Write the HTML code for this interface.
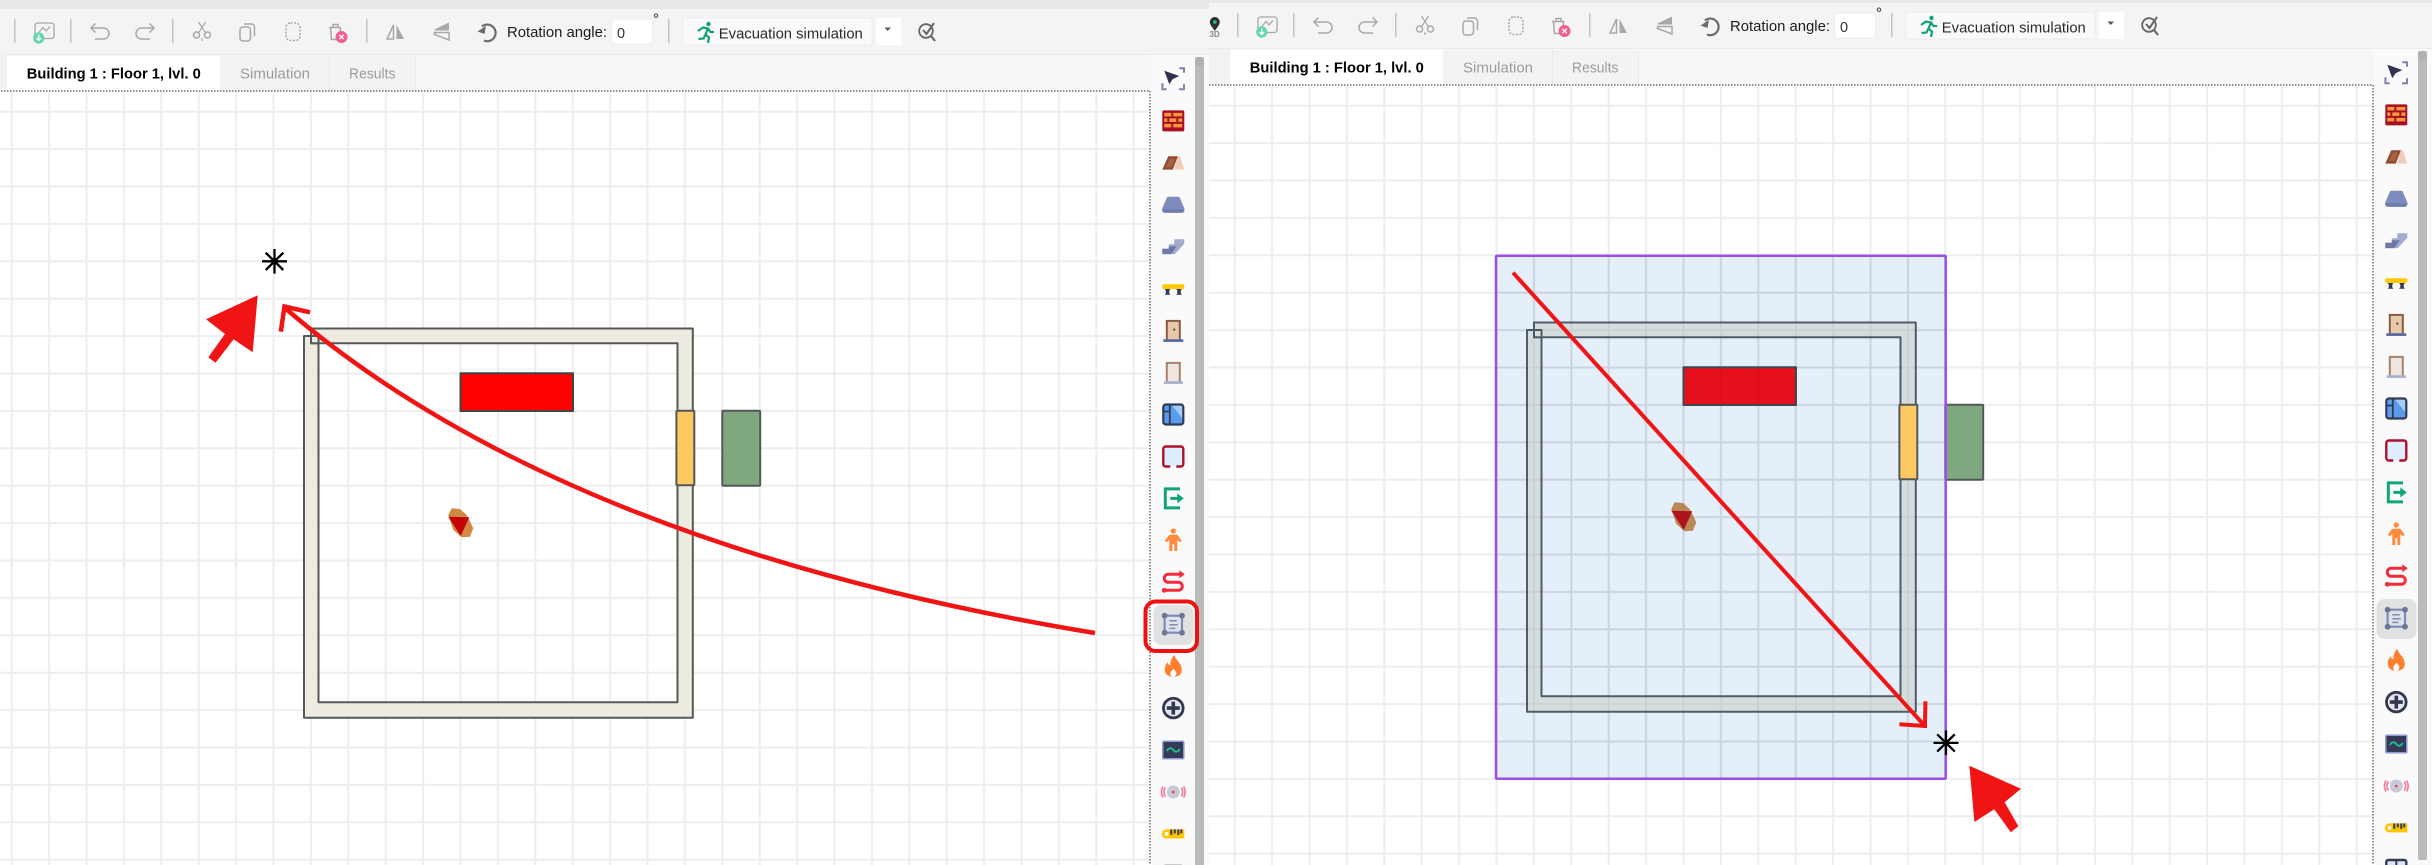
<!DOCTYPE html>
<html><head><meta charset="utf-8"><title>Evacuation</title>
<style>html,body{margin:0;padding:0;background:#fff;width:2432px;height:865px;overflow:hidden}svg{display:block}
text{font-family:"Liberation Sans",sans-serif}</style></head>
<body>
<svg xmlns="http://www.w3.org/2000/svg" width="2432" height="865" viewBox="0 0 2432 865">
<defs>
<pattern id="grid" patternUnits="userSpaceOnUse" x="-7" y="93" width="37.4" height="37.4">
<path d="M18.7 0V37.4M0 18.7H37.4" stroke="#ededed" stroke-width="2" fill="none"/>
</pattern>

<g id="scene">
<rect x="-14" y="92" width="1165" height="790" fill="#fff"/>
<rect x="-14" y="92" width="1165" height="790" fill="url(#grid)"/>
<g stroke="#55585a" stroke-width="2" stroke-linejoin="round">
<path d="M311 328.5H692.8V717.7H304V336H318.5V702.3H677.5V343.3H311Z" fill="#eeebe0"/>
<path d="M304 336H318.5V343.3" fill="none"/>
<rect x="311" y="336" width="7.5" height="7.5" fill="none" stroke-width="1.6"/>
<rect x="460.5" y="373.3" width="112.5" height="37.7" fill="#ff0000" stroke="#444"/>
</g>
<path d="M448.3 515L451.7 508.3 460 509 466.7 515 473.3 528.3 470 536.7 461.7 537.3 453.3 530Z" fill="#d08a45"/>
<path d="M448.3 516.7L469.3 517.3 460.7 536Z" fill="#c40505"/>
</g>
<g id="doorwin" stroke="#55585a" stroke-width="2">
<rect x="676.4" y="410.7" width="17.9" height="74.6" fill="#fdc962" rx="1"/>
<rect x="722.3" y="410.7" width="37.9" height="75" fill="#80a87e" rx="1"/>
</g>

<g id="toolbar">
<rect x="-14" y="-6" width="1223" height="15" fill="#e8e8e8"/>
<rect x="-14" y="9" width="1223" height="46" fill="#f4f4f4"/>
<rect x="-14" y="54" width="1223" height="1" fill="#ebebeb"/>
<rect x="-14" y="55" width="1165" height="36" fill="#f7f7f7"/>
<rect x="-14" y="55" width="21" height="36" fill="#f2f2f2"/>
<rect x="220" y="56" width="195" height="35" fill="#f3f3f3"/>
<rect x="329" y="56" width="1" height="35" fill="#e9e9e9"/>
<rect x="415" y="56" width="1" height="35" fill="#e9e9e9"/>
<rect x="7" y="56" width="213" height="35" fill="#fff"/>
<g fill="#c4c4c4">
<rect x="14" y="19" width="1.5" height="24"/><rect x="70" y="19" width="1.5" height="24"/><rect x="172" y="19" width="1.5" height="24"/><rect x="366" y="19" width="1.5" height="24"/><rect x="668" y="19" width="1.5" height="24"/>
</g>
<g fill="none" stroke="#a8a8a8" stroke-width="1.3">
<rect x="35" y="23" width="19" height="15.5" rx="2.5"/>
<path d="M38.5 33L43 27.5 46 31 50 26.5"/>
</g>
<circle cx="38.8" cy="38" r="5.6" fill="#63d6ad"/><path d="M38.8 34.5V40M36.4 38l2.4 2.4 2.4-2.4" stroke="#fff" stroke-width="1.3" fill="none"/>
<g fill="none" stroke="#a8a8a8" stroke-width="1.5">
<path d="M91 28H103.5A5.5 5.5 0 0 1 103.5 39H95M95.5 23.5L91 28 95.5 32.5"/>
<path d="M154 28H141.500A5.500 5.500 0 0 0 141.500 39H150M149.500 23.500L154 28 149.500 32.500"/>
<circle cx="196.500" cy="35" r="3"/><circle cx="207.500" cy="35" r="3"/>
<path d="M198.500 32.800L205.500 22M205.500 32.800L198.500 22M202 38V41" stroke-width="1.200"/>
<rect x="240" y="27" width="10.500" height="14" rx="3"/>
<path d="M244 24H251.500A3 3 0 0 1 254.500 27V36"/>
<rect x="286" y="23" width="14" height="17.500" rx="4.500" stroke-dasharray="2 1.500"/>
<path d="M329 27.500H341M330.500 27.500L331.500 39.500H339.500L340.500 27.500M333 27.500V24.500H338V27.500"/>
<path d="M393.500 25L387 39H393.500Z"/>
<path d="M434.500 32.500H449L449 40 434.500 34.500Z"/>
</g>
<circle cx="341.500" cy="37" r="6" fill="#f2608e"/><path d="M339.300 34.800L343.700 39.200M343.700 34.800L339.300 39.200" stroke="#fff" stroke-width="1.300"/>
<path d="M396.500 25L404 39H396.500Z" fill="#a8a8a8"/>
<path d="M434.500 29.500L449 22.500V30.500H434.500Z" fill="#a8a8a8"/>
<path d="M482 26.500A8.300 8.300 0 1 1 484 40.500" fill="none" stroke="#6b6b6b" stroke-width="2.200"/>
<path d="M477.500 31.500L486 26 484.500 34Z" fill="#6b6b6b"/>
<rect x="611.600" y="19" width="41" height="25.300" rx="3" fill="#fff" stroke="#ececec"/>
<circle cx="656" cy="15.700" r="1.700" fill="none" stroke="#444" stroke-width="1"/>
<rect x="683" y="18" width="189" height="27" rx="2" fill="#fafafa" stroke="#ececec"/>
<rect x="876" y="18" width="25" height="27" fill="#fff"/>
<path d="M884.500 27.500H891L887.700 31Z" fill="#555"/>
<circle cx="708.500" cy="24" r="2.200" fill="#12a36d"/>
<path d="M698 31L703 27.500 708 28.500 705.500 34.500 709 37.500 708 43M705.500 34.500L703.500 38.500 698.500 39M708 28.500L710.500 32 714 32" fill="none" stroke="#12a36d" stroke-width="2.200"/>
<circle cx="926" cy="31" r="6.800" fill="none" stroke="#666" stroke-width="1.800"/>
<path d="M931 36L935 41" stroke="#666" stroke-width="2.200"/>
<path d="M923 30L926.500 34 934 23" fill="none" stroke="#666" stroke-width="2"/>
<path d="M-14 91H1150V875" fill="none" stroke="#6d6d6d" stroke-width="1.500" stroke-dasharray="1.500 1.500"/>
</g>

<g id="sidebar">
<rect x="1151" y="55" width="58" height="820" fill="#fafafa"/>
<rect x="1195" y="57" width="9" height="809" rx="2" fill="#b9baba"/>
<rect x="1195" y="57" width="9" height="9" rx="4" fill="#b0b1b1"/>
<rect x="1153.500" y="605" width="40" height="40" rx="8" fill="#e0e2e2"/>

<g transform="translate(1173.300 79)">
<path d="M-9-8.300L6-3-.7.300-4 5.300Z" fill="#30324f"/>
<path d="M6-10.700H10.700V-6.300M-10.900 4.300V10.300H-6.700M5.700 10.300H10.700V5.300" fill="none" stroke="#7c84ac" stroke-width="2"/>
</g>
<g transform="translate(1173.300 120.900)">
<rect x="-11" y="-10.500" width="22" height="21" rx="1.500" fill="#a80f25"/>
<g fill="#f79a3d"><rect x="-9" y="-8" width="7" height="3.500"/><rect x="0" y="-8" width="9" height="3.500"/><rect x="-9" y="-2.500" width="3" height="3.500"/><rect x="-4" y="-2.500" width="7" height="3.500"/><rect x="5" y="-2.500" width="4" height="3.500"/><rect x="-9" y="3" width="7" height="3.500"/><rect x="0" y="3" width="9" height="3.500"/></g>
</g>
<g transform="translate(1173.300 162.900)">
<path d="M4-6.700H6.700L11 6.700H1Z" fill="#f0cdb8"/>
<path d="M-11 6.700L-5-6.700H4.500L-.5 6.700Z" fill="#8f4a35"/>
<path d="M-7.500 4.500L-3.500-4.500H2L-2 4.500Z" fill="#a8623f"/>
</g>
<g transform="translate(1173.300 204.800)">
<path d="M-5-8H5Q6-8 6.500-7L11 3.500Q12 8 8 8H-8Q-12 8-11 3.500L-6.500-7Q-6-8-5-8Z" fill="#7e8cbd"/>
<path d="M-11 4.500H11L11 5Q11 8 8 8H-8Q-11 8-11 5Z" fill="#6d7aab"/>
</g>
<g transform="translate(1173.300 246.800)">
<path d="M-11 7.300V2H-4.500V-2.500H1V-7.500H11V-3L1.500 7.300Z" fill="#a3abcf"/>
<path d="M-11 2H-4.500V-.5H3.500L-2 7.300H-11Z" fill="#6e79a8"/>
</g>
<g transform="translate(1173.300 288.700)">
<rect x="-11" y="-4.500" width="22" height="4.800" rx="1.500" fill="#ffc800"/>
<path d="M-8.500.3H-3L-4 2V4.500L-2.800 6H-8.700L-7.500 4.500V2ZM3 .3H8.500L7.500 2V4.500L8.700 6H2.800L4 4.500V2Z" fill="#333a55"/>
</g>
<g transform="translate(1173.300 330.600)">
<rect x="-7.500" y="-10.700" width="15" height="19.500" fill="#8a5a44"/>
<rect x="-5.500" y="-8.700" width="11" height="17.500" fill="#e8c9ab"/>
<circle cx="1" cy="-1" r="1.100" fill="#6b3f2a"/>
<rect x="-10" y="8.700" width="20" height="2.600" fill="#5566a0"/>
</g>
<g transform="translate(1173.300 372.600)">
<rect x="-7.500" y="-10.700" width="15" height="19.500" fill="#a8826a"/>
<rect x="-5.500" y="-8.700" width="11" height="17.500" fill="#efe6e0"/>
<rect x="-9.500" y="8.700" width="19" height="2.600" fill="#a8b0d0"/>
</g>
<g transform="translate(1173.300 414.500)">
<rect x="-10" y="-10" width="20" height="20" rx="2.500" fill="#5a9bec"/>
<path d="M-2-10L10 5V-10Z" fill="#a6cdf5"/>
<path d="M-3.500-10V10M-10-3H-3.500" stroke="#333a55" stroke-width="1.800"/>
<rect x="-10" y="-10" width="20" height="20" rx="2.500" fill="none" stroke="#333a55" stroke-width="2.200"/>
</g>
<g transform="translate(1173.300 456.500)">
<rect x="-10" y="-10" width="20" height="20" rx="2.500" fill="#ddeeff"/>
<path d="M-3 10H-7.500A2.500 2.500 0 0 1-10 7.500V-7.500A2.500 2.500 0 0 1-7.500-10H7.500A2.500 2.500 0 0 1 10-7.500V7.500A2.500 2.500 0 0 1 7.500 10H3" fill="none" stroke="#b0102a" stroke-width="2.400"/>
</g>
<g transform="translate(1173.300 498.400)">
<path d="M6.700-9.500H-8V9.500H6.700" fill="none" stroke="#12a56f" stroke-width="3"/>
<path d="M-3 0H5" stroke="#12a56f" stroke-width="3"/>
<path d="M4-5L10.500 0 4 5Z" fill="#12a56f"/>
</g>
<g transform="translate(1173.300 540.300)">
<circle cx="0" cy="-9.300" r="2.600" fill="#ff8a3c"/>
<path d="M-4-5.500H4L8.500.5 6.500 2 4 -.5V10.700H1V4H-1V10.700H-4V-.5L-6.500 2-8.500.5Z" fill="#ff8a3c"/>
</g>
<g transform="translate(1173.300 582.300)">
<path d="M-8 8H5A4 4 0 0 0 5 0H-5A4 4 0 0 1-5-8H8" fill="none" stroke="#f42b3c" stroke-width="3"/>
<circle cx="-9" cy="8" r="2.400" fill="#f42b3c"/>
<path d="M6-12L11.500-8 6-4Z" fill="#f42b3c"/>
</g>
<g transform="translate(1173.300 624.200)">
<rect x="-8.700" y="-8.500" width="17.400" height="17" fill="#dfe2e8" stroke="#7f8bb5" stroke-width="2.200"/>
<g fill="#6c7699"><circle cx="-8.700" cy="-8.500" r="2.900"/><circle cx="8.700" cy="-8.500" r="2.900"/><circle cx="-8.700" cy="8.500" r="2.900"/><circle cx="8.700" cy="8.500" r="2.900"/></g>
<path d="M-4-3.500H3.500M-4 .5H4.500M-4 4.200H2" stroke="#7f8bb5" stroke-width="1.500"/>
</g>
<g transform="translate(1173.300 666.200)">
<path d="M1-11.500C2-6 8-4 8.500 3 9 8 5 10.500 0 10.500S-9 8-8.500 2.500C-8.200-1-6.500-3-5.500-4-5-1.500-4-1-3-1-3-5-2-8 1-11.500Z" fill="#ff7f2e"/>
<path d="M0 2.500C2 4.500 3.500 6 3 8 2.500 9.500 1 10.500 0 10.500S-3 9.500-3 8C-3.200 6-1.500 4.500 0 2.500Z" fill="#fff"/>
</g>
<g transform="translate(1173.300 708.100)">
<circle r="9.800" fill="#e4e8f0" stroke="#33384f" stroke-width="2.800"/>
<path d="M-1.800-6.500H1.800V-1.800H6.500V1.800H1.800V6.500H-1.800V1.800H-6.500V-1.800H-1.800Z" fill="#33384f"/>
</g>
<g transform="translate(1173.300 750)">
<rect x="-10.500" y="-8.700" width="21" height="17.400" rx="1" fill="#363a58" stroke="#8f9bd0" stroke-width="1.500"/>
<path d="M-6.500 1C-4-3-1.500-2 0 0S4 3 6.500-1" fill="none" stroke="#19c88b" stroke-width="1.800"/>
</g>
<g transform="translate(1173.300 792)">
<circle r="6.500" fill="#c7c9d6"/><circle r="1.300" fill="#e83a5f"/>
<path d="M-8-4.500A8 8 0 0 0-8 4.500M8-4.500A8 8 0 0 1 8 4.500M-10.300-5.500A11 11 0 0 0-10.300 5.500M10.300-5.500A11 11 0 0 1 10.300 5.500" fill="none" stroke="#f47c9c" stroke-width="1.700"/>
</g>
<g transform="translate(1173.300 833.900)">
<path d="M-7-4.500H11V4.500H-7A4.500 4.500 0 0 1-7-4.500Z" fill="#ffc400"/>
<circle cx="-6.800" cy="0" r="2" fill="#fff"/>
<path d="M-2-4.500V1M1.500-4.500V-.5M5-4.500V1M8-4.500V-.5" stroke="#333a55" stroke-width="2"/>
</g>
<g transform="translate(1173.300 876)">
<rect x="-10" y="-10" width="20" height="20" rx="2" fill="#dfe4f3" stroke="#333a55" stroke-width="2.400"/>
<path d="M0-10V10" stroke="#333a55" stroke-width="2"/>
</g>
</g>
</defs>

<!-- LEFT PANEL -->
<g>
<use href="#scene"/>
<use href="#doorwin"/>
<use href="#toolbar"/>
<use href="#sidebar"/>
<text x="26.800" y="78.700" font-size="14.500" font-weight="bold" fill="#000" textLength="174" lengthAdjust="spacingAndGlyphs">Building 1 : Floor 1, lvl. 0</text>
<text x="240" y="78.700" font-size="14.500" fill="#9c9c9c" textLength="70" lengthAdjust="spacingAndGlyphs">Simulation</text>
<text x="349" y="78.700" font-size="14.500" fill="#9c9c9c" textLength="46.500" lengthAdjust="spacingAndGlyphs">Results</text>
<text x="507" y="37" font-size="15" fill="#1c1c1c" textLength="100" lengthAdjust="spacingAndGlyphs">Rotation angle:</text>
<text x="617" y="38" font-size="14.500" fill="#333">0</text>
<text x="718.800" y="38.300" font-size="15" fill="#2a2a2a" textLength="144" lengthAdjust="spacingAndGlyphs">Evacuation simulation</text>
</g>

<!-- RIGHT PANEL -->
<g transform="translate(1223 -6)">
<use href="#scene"/>
<rect x="273" y="261.700" width="449.700" height="523.100" fill="#2f7dd9" fill-opacity=".125"/>
<rect x="273" y="261.700" width="449.700" height="523.100" fill="url(#grid)" style="mix-blend-mode:multiply" opacity=".7"/>
<use href="#doorwin"/>
<rect x="273" y="261.700" width="449.700" height="523.100" rx="1" fill="none" stroke="#9b4de8" stroke-width="2.500"/>
<use href="#toolbar"/>
<use href="#sidebar"/>
<text x="26.800" y="78.700" font-size="14.500" font-weight="bold" fill="#000" textLength="174" lengthAdjust="spacingAndGlyphs">Building 1 : Floor 1, lvl. 0</text>
<text x="240" y="78.700" font-size="14.500" fill="#9c9c9c" textLength="70" lengthAdjust="spacingAndGlyphs">Simulation</text>
<text x="349" y="78.700" font-size="14.500" fill="#9c9c9c" textLength="46.500" lengthAdjust="spacingAndGlyphs">Results</text>
<text x="507" y="37" font-size="15" fill="#1c1c1c" textLength="100" lengthAdjust="spacingAndGlyphs">Rotation angle:</text>
<text x="617" y="38" font-size="14.500" fill="#333">0</text>
<text x="718.800" y="38.300" font-size="15" fill="#2a2a2a" textLength="144" lengthAdjust="spacingAndGlyphs">Evacuation simulation</text>
</g>

<!-- pin icon (page coords) -->
<path d="M1214.800 17A5 5 0 0 1 1219.800 22C1219.800 25 1216.500 28 1214.800 31 1213 28 1209.800 25 1209.800 22A5 5 0 0 1 1214.800 17Z" fill="#303030"/>
<circle cx="1214.800" cy="22" r="1.800" fill="#19c88b"/>
<text x="1209.500" y="37" font-size="8" font-weight="bold" fill="#8a8a8a">3D</text>

<!-- ANNOTATIONS LEFT -->
<g fill="none" stroke="#f01414" stroke-width="4.500">
<path d="M1095 633Q560 545 285 308"/>
<path d="M310 312.300L284.500 306.500 280.800 331.700"/>
</g>
<path d="M257.700 295.300L206 319.300 225 334 208.300 357.300 215.600 362.700 233.600 339.300 252.700 352.300Z" fill="#f01414"/>
<g stroke="#000" stroke-width="2.300" fill="none">
<path d="M274.500 249V273.600M262 261.300H287M265.700 252.700L283.300 270M283.300 252.700L265.700 270"/>
</g>
<rect x="1145.500" y="601.500" width="51.500" height="49.500" rx="10" fill="none" stroke="#ee1111" stroke-width="4"/>

<!-- ANNOTATIONS RIGHT -->
<g fill="none" stroke="#f01414" stroke-width="4">
<path d="M1513 272.700L1924 725"/>
<path d="M1925.400 701.300L1925 726 1899.400 724.300"/>
</g>
<path d="M1969.400 765.800L2021 788.700 2004.600 802.200 2018.400 826.300 2010.800 832.200 1994.300 809.300 1974.400 822Z" fill="#f01414"/>
<g stroke="#000" stroke-width="2.300" fill="none">
<path d="M1946 730.500V755M1933.500 742.900H1958.500M1937.200 734.300L1954.800 751.600M1954.800 734.300L1937.200 751.600"/>
</g>
</svg>
</body></html>
